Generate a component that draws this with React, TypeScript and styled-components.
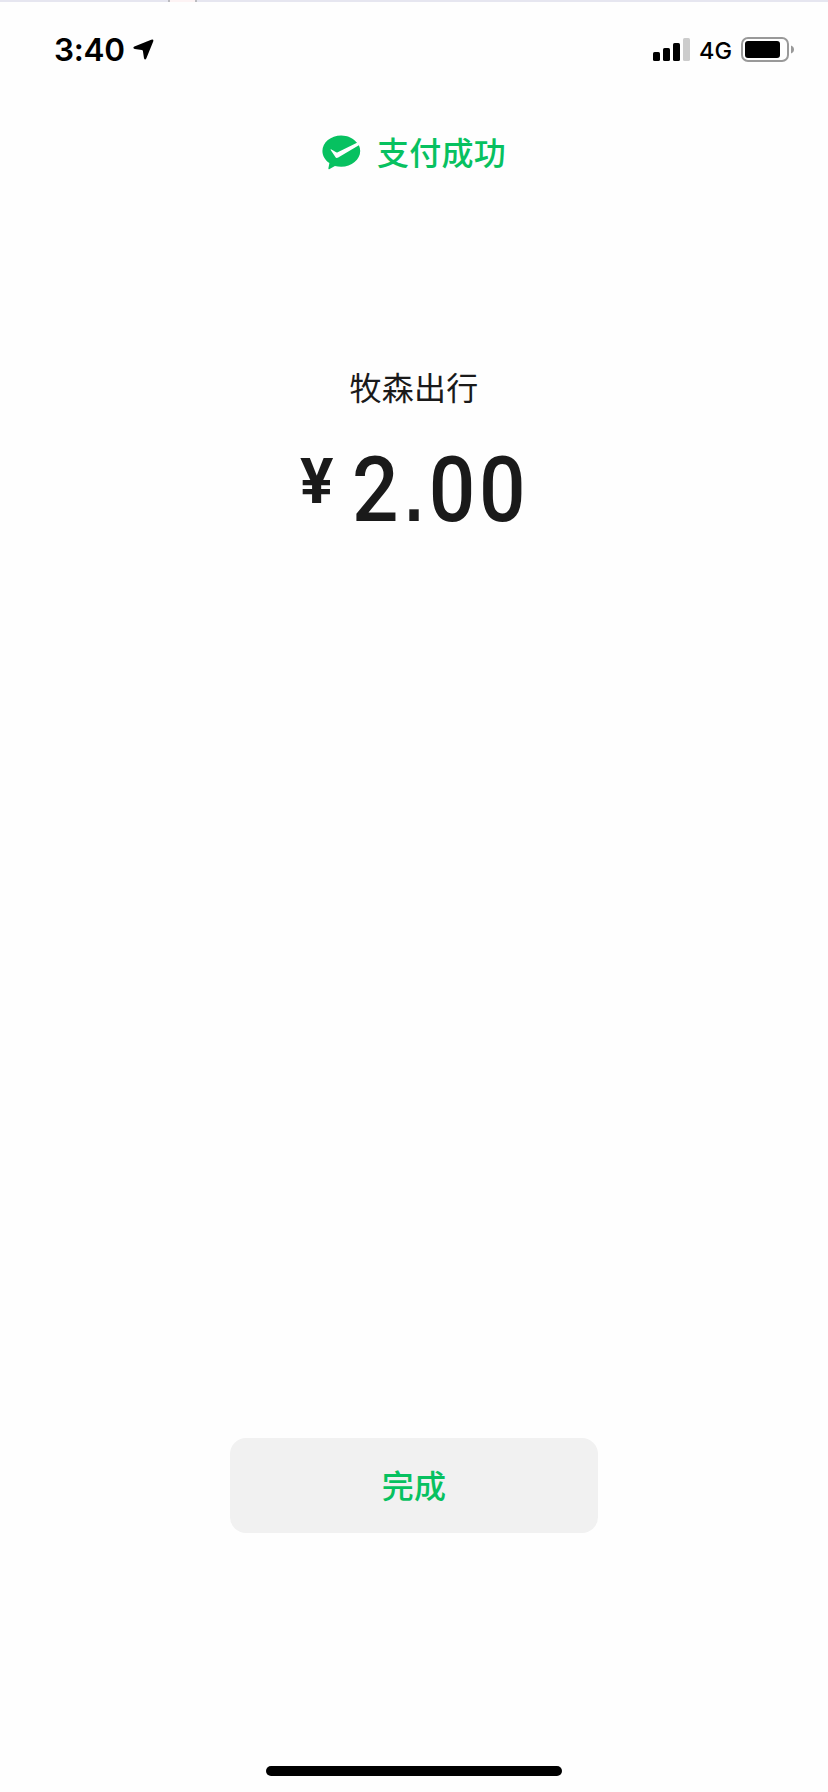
import React from "react";
import styled, { createGlobalStyle } from "styled-components";

const GlobalStyle = createGlobalStyle`
  * { box-sizing: border-box; }
  body { margin: 0; background: #fefefe; }
`;

const Screen = styled.main`
  width: 828px;
  height: 1792px;
  display: flex;
  flex-direction: column;
  align-items: center;
  overflow: hidden;
  background: #fefefe;
  color: #1a1a1a;
  font-family: Inter, "Noto Sans CJK SC", sans-serif;
`;

const TopEdge = styled.div`
  display: flex;
  width: 100%;
  height: 2px;
  flex: none;
`;

const EdgeLine = styled.span<{ $width?: number }>`
  ${(p) => (p.$width ? `width: ${p.$width}px;` : "flex: 1;")}
  background: #e6e6f0;
`;

const EdgeTick = styled.span`
  width: 2px;
  background: #bcbcc0;
`;

const EdgeGap = styled.span`
  width: 25px;
  background: #fdf3f4;
`;

const StatusBar = styled.header`
  display: flex;
  align-items: center;
  justify-content: space-between;
  width: 100%;
  height: 95px;
  flex: none;
  padding: 0 34px 0 54px;
  color: #000;
`;

const StatusGroup = styled.div<{ $gap: number }>`
  display: flex;
  align-items: center;
  gap: ${(p) => p.$gap}px;
`;

const Time = styled.time`
  padding-bottom: 1px;
  font-size: 31.5px;
  line-height: 39px;
  font-weight: 600;
  letter-spacing: -0.3px;
`;

const Network = styled.span`
  font-size: 23.5px;
  line-height: 30px;
  font-weight: 500;
  padding-top: 2px;
`;

const Result = styled.div`
  display: flex;
  align-items: center;
  gap: 16px;
  height: 48px;
  margin-top: 31px;
  color: #07c160;
`;

const ResultText = styled.span`
  margin-top: -3px;
  font: 500 32px/48px "Noto Sans CJK SC", sans-serif;
  letter-spacing: 0.3px;
`;

const Merchant = styled.h1`
  margin: 186px 0 0;
  font: 400 32px/48px "Noto Sans CJK SC", sans-serif;
  letter-spacing: 0.3px;
`;

const Amount = styled.div`
  display: flex;
  align-items: flex-start;
  width: 228px;
  margin-top: 26px;
  font-family: Roboto, sans-serif;
`;

const Currency = styled.span`
  width: 33px;
  margin: 9px 19px 0 0;
  font-size: 63px;
  line-height: 74px;
  font-weight: 700;
  transform: scaleX(0.99);
  transform-origin: left;
`;

const Value = styled.span`
  font-size: 91px;
  line-height: 108px;
  font-weight: 500;
  letter-spacing: 4px;
  transform: scaleX(0.9);
  transform-origin: left;
`;

const DecimalPoint = styled.span`
  margin: 0 2px 0 -2px;
  font-family: "Liberation Sans", sans-serif;
  font-size: 110px;
  font-weight: 400;
  line-height: 0;
  letter-spacing: -1px;
`;

const DoneButton = styled.button`
  width: 368px;
  height: 95px;
  margin-top: auto;
  border: 0;
  border-radius: 16px;
  padding: 0 0 3px;
  background: #f1f1f1;
  color: #07c160;
  font: 500 32px/48px "Noto Sans CJK SC", sans-serif;
  letter-spacing: 0.3px;
`;

const HomeIndicator = styled.div`
  width: 296px;
  height: 10px;
  flex: none;
  margin: 233px 0 16px;
  border-radius: 5px;
  background: #000;
`;

const LocationIcon = () => (
  <svg width="21" height="21" viewBox="0 0 21 21">
    <path d="M18.2.7Q21-.2 20.2 2.6L13.4 19.2Q12 21.8 11 19.2L9.9 12Q9.7 11.1 8.8 11L1.8 10Q-.8 9 1.4 7.6Z" />
  </svg>
);

const SignalIcon = () => (
  <svg width="37" height="23" viewBox="0 0 37 23">
    <rect y="14" width="7" height="9" rx="1.6" />
    <rect x="10" y="10" width="7" height="13" rx="1.6" />
    <rect x="20" y="5" width="7" height="18" rx="1.6" />
    <rect x="30" width="7" height="23" rx="1.6" fill="#ccc" />
  </svg>
);

const BatteryIcon = () => (
  <svg width="53" height="25" viewBox="0 0 53 25">
    <rect x="1" y="1" width="46" height="23" rx="6" fill="none" stroke="#999" strokeWidth="2" />
    <rect x="4" y="4" width="35" height="17" rx="3" />
    <path d="M50 8.5Q53 9.6 53 12.5T50 16.5Z" fill="#999" />
  </svg>
);

const PaidIcon = () => (
  <svg width="39" height="35" viewBox="0 0 39 35">
    <path
      fill="#07c160"
      d="M19.2.4C8.8.4.4 7.3.4 16c0 4.9 2.8 9.2 7 12.1l-1 5.1q-.2 1.5 1.2.8l5.3-3.1q3 .8 6.3.8c10.4 0 19-7 19-15.7q0-3.1-1.3-5.8L16.2 22.6q-2 1.1-3-.8L8.7 15q-.4-1.2.8-.6l4.2 2.7q1 .5 2 .1L35 7.7C31.4 3.2 25.6.4 19.2.4Z"
    />
  </svg>
);

export default function App() {
  return (
    <>
      <GlobalStyle />
      <Screen>
        <TopEdge>
          <EdgeLine $width={168} />
          <EdgeTick />
          <EdgeGap />
          <EdgeTick />
          <EdgeLine />
        </TopEdge>
        <StatusBar>
          <StatusGroup $gap={8}>
            <Time>3:40</Time>
            <LocationIcon />
          </StatusGroup>
          <StatusGroup $gap={9}>
            <SignalIcon />
            <Network>4G</Network>
            <BatteryIcon />
          </StatusGroup>
        </StatusBar>
        <Result>
          <PaidIcon />
          <ResultText>支付成功</ResultText>
        </Result>
        <Merchant>牧森出行</Merchant>
        <Amount>
          <Currency>¥</Currency>
          <Value>
            2<DecimalPoint>.</DecimalPoint>00
          </Value>
        </Amount>
        <DoneButton>完成</DoneButton>
        <HomeIndicator />
      </Screen>
    </>
  );
}
